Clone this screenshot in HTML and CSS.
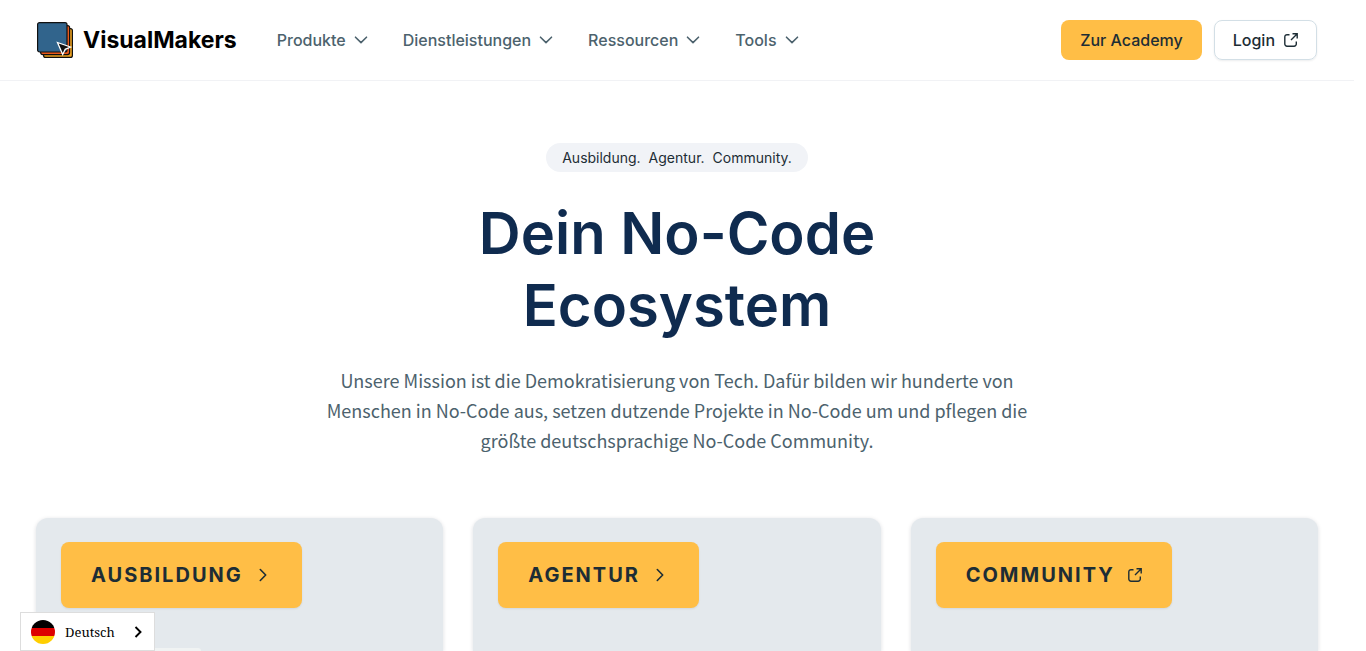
FILE: index.html
```html
<!DOCTYPE html>
<html lang="de">
<head>
<meta charset="utf-8">
<meta name="viewport" content="width=device-width, initial-scale=1">
<title>VisualMakers</title>
<link rel="stylesheet" href="styles.css">
</head>
<body>
<svg class="sprite" aria-hidden="true">
  <symbol id="chevron-down" viewBox="0 0 14 8"><path d="M1.500 1.200 7 6.600l5.500-5.400" fill="none" stroke="currentColor" stroke-width="1.600" stroke-linecap="round" stroke-linejoin="round"/></symbol>
  <symbol id="chevron-right" viewBox="0 0 8 14"><path d="M1.300 1.500 6.700 7l-5.400 5.500" fill="none" stroke="currentColor" stroke-width="1.600" stroke-linecap="round" stroke-linejoin="round"/></symbol>
  <symbol id="external" viewBox="0 0 14 14"><path d="M5.500 1.700H3A2.200 2.200 0 0 0 .8 3.900V11A2.200 2.200 0 0 0 3 13.200h7.100a2.200 2.200 0 0 0 2.200-2.200V8.500M8.500.8h4.700v4.700M13 1 7 7" fill="none" stroke="currentColor" stroke-width="1.400"/></symbol>
</svg>
<header class="header">
  <a class="brand" href="#">
    <svg class="brand-mark" viewBox="0 0 36 36" aria-hidden="true">
      <g stroke="#111" stroke-width="1.200">
        <rect x="6.600" y="6.600" width="28.800" height="28.800" rx="2" fill="#eda11f"/>
        <rect x="3.600" y="3.600" width="29" height="29" rx="2" fill="#e8591c"/>
        <rect x=".6" y=".6" width="29.400" height="29.400" rx="2" fill="#31648c"/>
      </g>
      <path d="M20.500 20.500 33.500 25l-5.300 2.300-2.500 5.200Z" fill="#111" stroke="#fff" stroke-width="1.300"/>
    </svg>
    <span class="brand-name">VisualMakers</span>
  </a>
  <nav class="nav" aria-label="Hauptnavigation">
    <button class="nav-item" type="button">Produkte <svg class="chevron"><use href="#chevron-down"/></svg></button>
    <button class="nav-item" type="button">Dienstleistungen <svg class="chevron"><use href="#chevron-down"/></svg></button>
    <button class="nav-item" type="button">Ressourcen <svg class="chevron"><use href="#chevron-down"/></svg></button>
    <button class="nav-item" type="button">Tools <svg class="chevron"><use href="#chevron-down"/></svg></button>
  </nav>
  <div class="actions">
    <a class="button button-primary" href="#">Zur Academy</a>
    <a class="button button-outline" href="#">Login <svg class="external"><use href="#external"/></svg></a>
  </div>
</header>
<main class="main">
  <section class="hero">
    <p class="badge"><span>Ausbildung.</span><span>Agentur.</span><span>Community.</span></p>
    <h1 class="title">Dein No-Code<br>Ecosystem</h1>
    <p class="lead">Unsere Mission ist die Demokratisierung von Tech. Dafür bilden wir hunderte von Menschen in No-Code aus, setzen dutzende Projekte in No-Code um und pflegen die größte deutschsprachige No-Code Community.</p>
  </section>
  <section class="cards">
    <article class="card">
      <a class="card-button" href="#">Ausbildung <svg class="arrow"><use href="#chevron-right"/></svg></a>
      <div class="card-media"></div>
    </article>
    <article class="card">
      <a class="card-button" href="#">Agentur <svg class="arrow"><use href="#chevron-right"/></svg></a>
    </article>
    <article class="card">
      <a class="card-button" href="#">Community <svg class="external"><use href="#external"/></svg></a>
    </article>
  </section>
</main>
<button class="language" type="button">
  <svg class="flag" viewBox="0 0 24 24" aria-hidden="true">
    <clipPath id="disc"><circle cx="12" cy="12" r="12"/></clipPath>
    <g clip-path="url(#disc)"><path d="M0 0h24v8H0z"/><path d="M0 8h24v8H0z" fill="#d00"/><path d="M0 16h24v8H0z" fill="#ffce00"/></g>
  </svg>
  <span>Deutsch</span>
  <svg class="language-arrow" viewBox="0 0 8 12" aria-hidden="true"><path d="m1.500 1 5 5-5 5" fill="none" stroke="#000" stroke-width="1.900"/></svg>
</button>
</body>
</html>
```
FILE: styles.css
```css
* { box-sizing: border-box; }
body {
  margin: 0 12px 0 0;
  min-height: 100vh;
  display: flex;
  flex-direction: column;
  background: #fff;
  color: #1d2d35;
  font-family: Inter, "Open Sans", sans-serif;
}
a { color: inherit; text-decoration: none; }
button { font: inherit; cursor: pointer; }
svg { flex: none; }
.sprite { position: absolute; width: 0; height: 0; }

.header {
  display: flex;
  align-items: center;
  padding: 20px 37px;
  border-bottom: 1px solid #f1f2f5;
}
.brand { display: flex; align-items: center; gap: 10px; }
.brand-mark { width: 36px; height: 36px; }
.brand-name { font-size: 23px; line-height: 32px; font-weight: 700; color: #000; }
.nav { display: flex; gap: 35px; margin-left: 40px; }
.nav-item {
  display: flex;
  align-items: center;
  gap: 8px;
  padding: 0;
  border: 0;
  background: none;
  color: #4c626d;
  font-size: 16px;
  line-height: 24px;
  font-weight: 500;
}
.chevron { width: 14px; height: 8px; }
.actions { display: flex; gap: 12px; margin-left: auto; }
.button {
  display: flex;
  align-items: center;
  gap: 9px;
  height: 40px;
  padding: 0 18px;
  border: 1px solid transparent;
  border-radius: 8px;
  font-size: 16px;
  font-weight: 500;
}
.button-primary { background: #ffbe46; }
.button-outline { border-color: #d3dfe6; box-shadow: 0 1px 2px rgba(16, 24, 40, .08); }
.external { width: 14px; height: 14px; }

.main { flex: 1; display: flex; flex-direction: column; padding: 62px 36px 0; }
.hero { display: flex; flex-direction: column; align-items: center; text-align: center; }
.badge {
  display: flex;
  gap: 8px;
  margin: 0;
  padding: 4px 16px;
  border-radius: 16px;
  background: #f1f3f7;
  font-size: 14px;
  line-height: 21px;
}
.title {
  margin: 25px 0 0;
  color: #0f2b4f;
  font-size: 58px;
  line-height: 72px;
  font-weight: 600;
}
.lead {
  max-width: 720px;
  margin: 24px 0 0;
  color: #4c626d;
  font-family: "Noto Sans CJK SC", "Noto Sans", sans-serif;
  font-size: 18px;
  line-height: 30px;
}
.cards {
  flex: 1;
  display: grid;
  grid-template-columns: repeat(3, 1fr);
  gap: 30px;
  margin-top: 63px;
}
.card {
  padding: 24px 25px 0;
  border-radius: 12px 12px 0 0;
  background: #e4e9ed;
  box-shadow: 0 1px 4px rgba(16, 24, 40, .14);
}
.card-button {
  display: inline-flex;
  align-items: center;
  gap: 13px;
  height: 66px;
  padding: 0 30px;
  border-radius: 8px;
  background: #ffbe46;
  box-shadow: 0 1px 2px rgba(16, 24, 40, .08);
  font-size: 20px;
  font-weight: 700;
  letter-spacing: 2px;
  text-transform: uppercase;
}
.arrow { width: 8px; height: 14px; margin: 0 5px 0 3px; }
.card-media { width: 140px; height: 3px; margin-top: 40px; border-radius: 3px 3px 0 0; background: #f0f3f3; }

.language {
  position: fixed;
  left: 20px;
  bottom: 0;
  display: flex;
  align-items: center;
  gap: 10px;
  height: 39px;
  padding: 0 12px 0 10px;
  border: 1px solid #ddd;
  background: #fff;
  color: #000;
  font-family: "Noto Serif", "Droid Serif", "DejaVu Serif", serif;
  font-size: 13px;
}
.flag { width: 24px; height: 24px; }
.language-arrow { width: 8px; height: 12px; margin-left: 9px; }
```
